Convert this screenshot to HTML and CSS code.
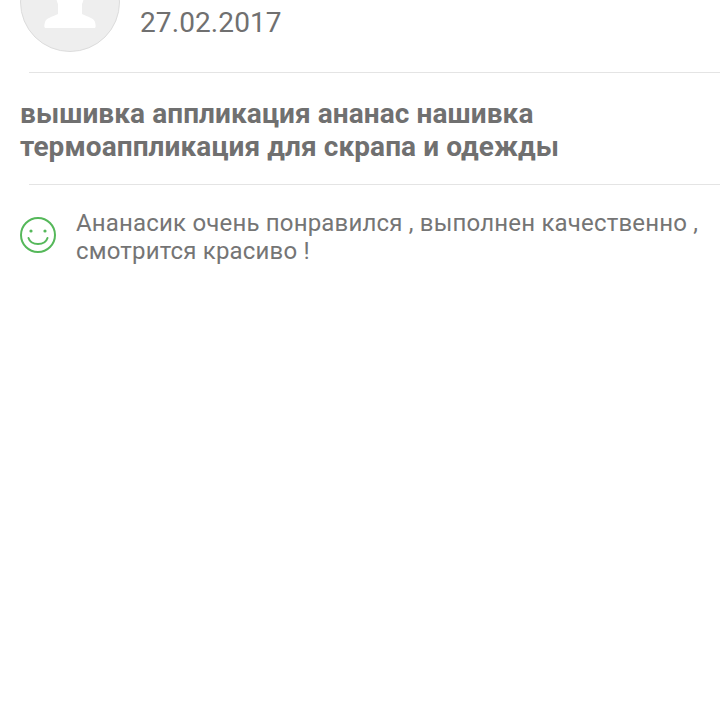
FILE: index.html
```html
<!DOCTYPE html>
<html lang="ru">
<head>
    <meta charset="UTF-8">
    <title>Отзыв</title>
    <link rel="stylesheet" href="styles.css">
</head>
<body>

<div class="review">
    <div class="header">
        <svg class="avatar" width="100" height="100" viewBox="0 0 100 100">
            <circle cx="50" cy="50" r="49.5" fill="#eeeeee" stroke="#dcdcdc"/>
            <path d="M26 76 C24 76 24 74 25 70 C26 66 32 65 38 62 L38 52 C34 44 34 20 50 20 C66 20 66 44 62 52 L62 62 C68 65 74 66 75 70 C76 74 76 76 74 76 Z" fill="#fff"/>
        </svg>
        <div class="date">27.02.2017</div>
    </div>
    <div class="divider"></div>
    <h2 class="title">вышивка аппликация ананас нашивка термоаппликация для скрапа и одежды</h2>
    <div class="divider"></div>
    <div class="comment">
        <svg class="smile" width="36" height="36" viewBox="0 0 36 36" fill="none" stroke="#55b85a" stroke-width="2">
            <circle cx="18" cy="18" r="17"/>
            <circle cx="11" cy="14" r="1.6" fill="#55b85a" stroke="none"/>
            <circle cx="25" cy="14" r="1.6" fill="#55b85a" stroke="none"/>
            <path d="M8.5 21 C11 29 25 29 27.5 21" stroke-linecap="round"/>
        </svg>
        <p class="text">Ананасик очень понравился , выполнен качественно , смотрится красиво !</p>
    </div>
</div>

</body>
</html>
```

FILE: styles.css
```css
body {
    font-family: Roboto, "Noto Sans", sans-serif;
    background: #fff;
    margin: 0;
    color: #757575;
    overflow: hidden;
}
.review {
    height: 720px;
    overflow: hidden;
}
.header {
    display: flex;
    height: 72px;
    padding-left: 20px;
    margin-top: -48px;
}
.avatar {
    flex: none;
}
.date {
    margin-left: 20px;
    margin-top: 55px;
    font-size: 28px;
    line-height: 32px;
    letter-spacing: 0.1px;
    color: #707070;
}
.divider {
    height: 1px;
    background: #e4e4e4;
    margin-left: 29px;
}
.header + .divider {
    margin-top: 48px;
}
.title {
    margin: 0;
    padding: 24px 20px 21px;
    font-size: 28px;
    line-height: 33px;
    font-weight: 700;
    letter-spacing: 0.08px;
    color: #707070;
}
.comment {
    display: flex;
    padding: 24px 16px 0 20px;
}
.smile {
    flex: none;
    margin-top: 8px;
}
.text {
    margin: 0 0 0 20px;
    font-size: 24px;
    line-height: 28px;
    letter-spacing: 0.18px;
}
```
